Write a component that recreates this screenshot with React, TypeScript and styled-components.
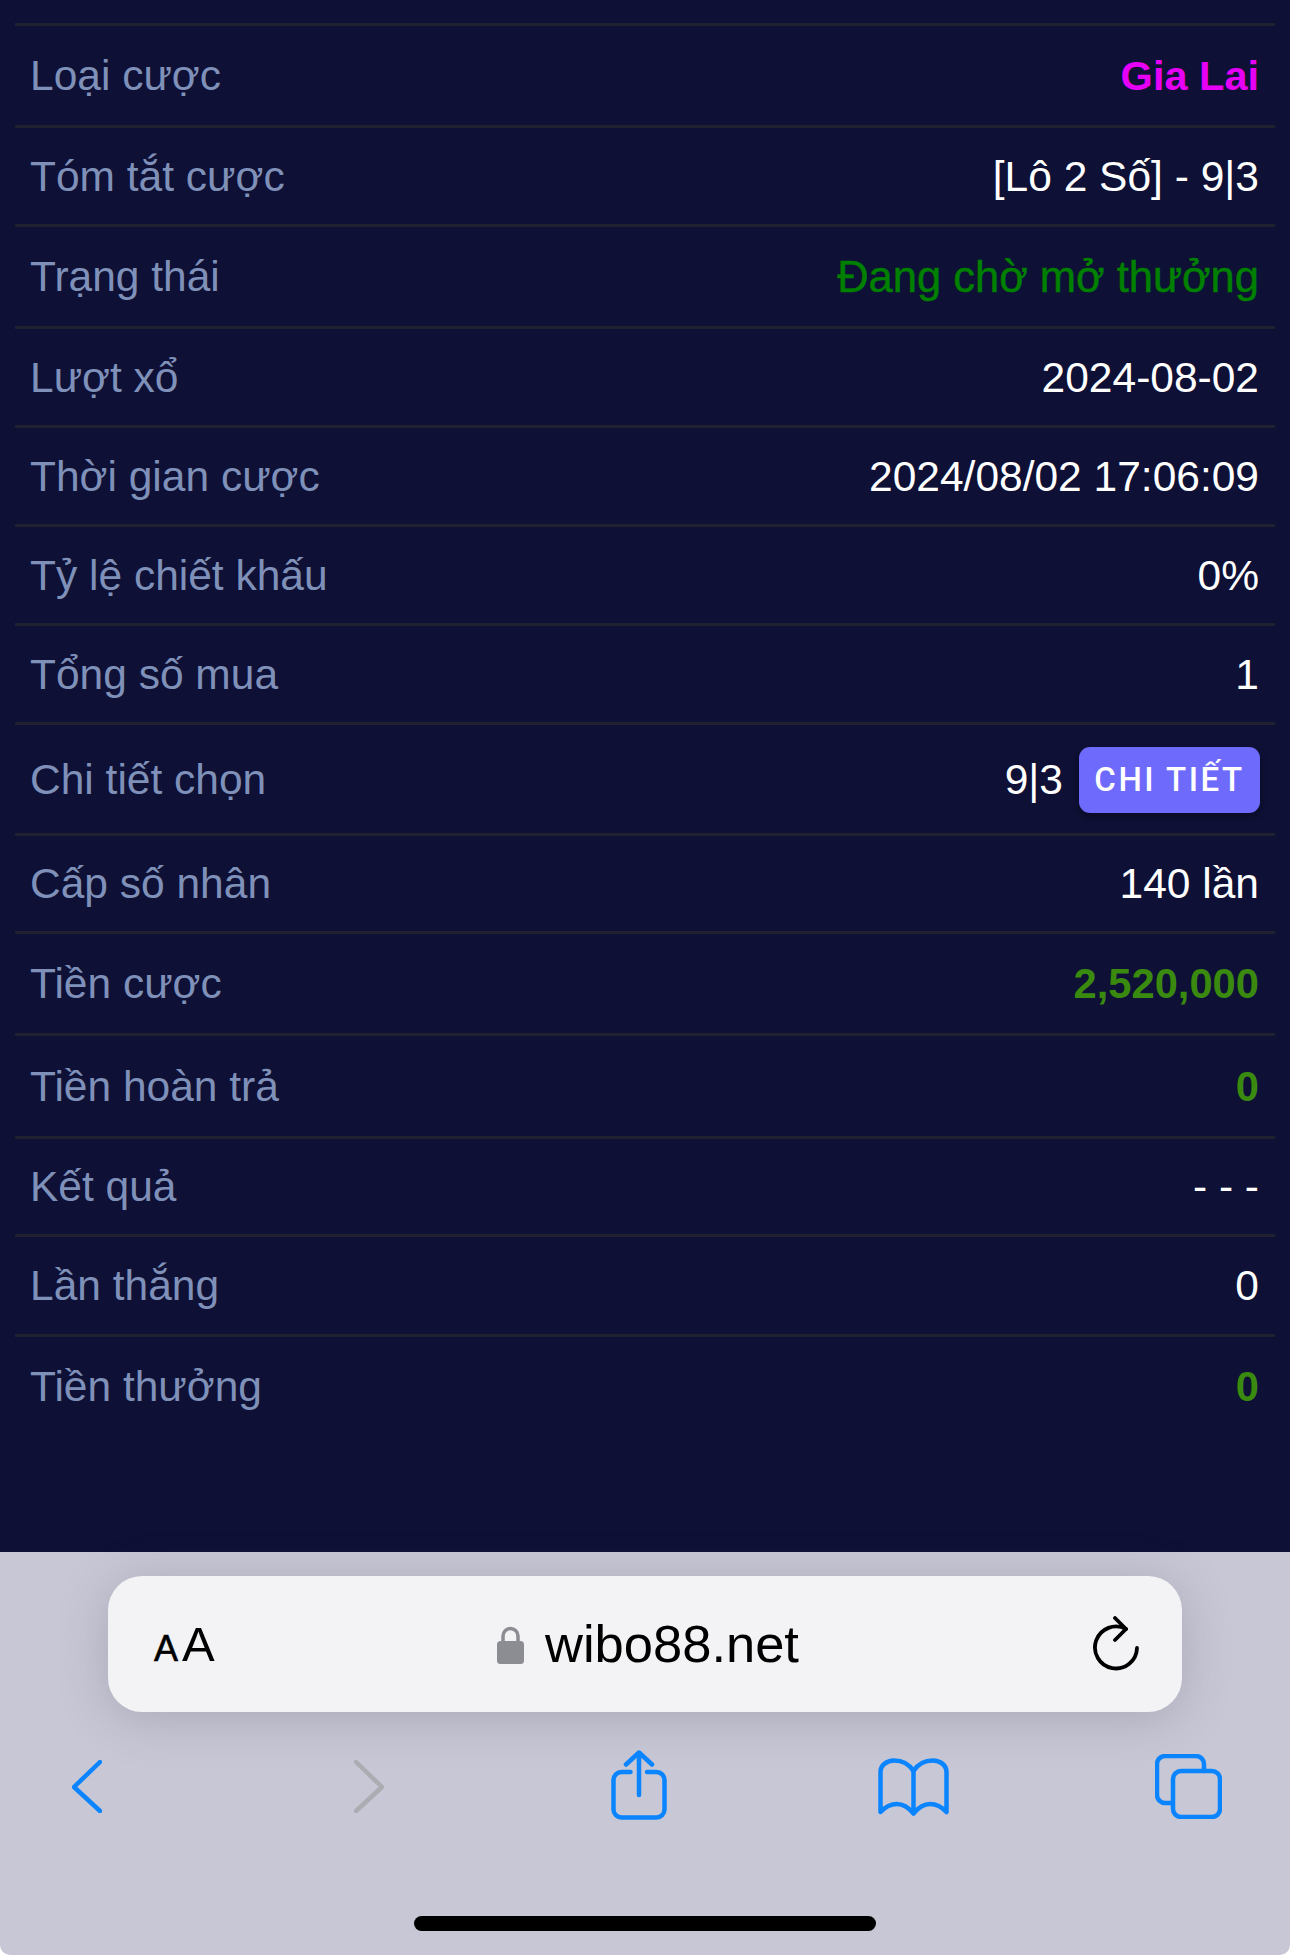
import React from "react";
import styled, { createGlobalStyle } from "styled-components";

const Global = createGlobalStyle`
  html, body { margin: 0; padding: 0; background: #fff; }
  body { font-family: "Liberation Sans", Arial, sans-serif; }
  * { box-sizing: border-box; }
`;

const Page = styled.div`
  width: 1290px;
  height: 1955px;
  display: flex;
  flex-direction: column;
  overflow: hidden;
  background: #fff;
`;

const Table = styled.div`
  flex: 1;
  padding: 23px 15px 0;
  display: flex;
  flex-direction: column;
  background: #0e1035;
`;

const Row = styled.div<{ $h: number }>`
  height: ${(p) => p.$h}px;
  border-top: 3px solid #1f2030;
  padding: 1px 16px 0 15px;
  display: flex;
  align-items: center;
  justify-content: space-between;
`;

const Label = styled.span`
  font-size: 42.5px;
  color: #7f90b9;
`;

type Tone = "plain" | "magenta" | "status" | "money";
const toneColor: Record<Tone, string> = {
  plain: "#ffffff",
  magenta: "#e600f5",
  status: "#008000",
  money: "#3a8a10",
};
const toneSize: Record<Tone, number> = {
  plain: 42.5,
  magenta: 41.5,
  status: 43.5,
  money: 41.7,
};

const Value = styled.span<{ $tone: Tone }>`
  font-size: ${(p) => toneSize[p.$tone]}px;
  color: ${(p) => toneColor[p.$tone]};
  font-weight: ${(p) => (p.$tone === "magenta" || p.$tone === "money" ? 700 : 400)};
  -webkit-text-stroke: ${(p) => (p.$tone === "status" ? "0.5px #008000" : "0")};
`;

const ValueGroup = styled.div`
  display: flex;
  align-items: center;
  gap: 16px;
`;

const DetailButton = styled.button`
  width: 181px;
  height: 66px;
  margin-right: -1px;
  border: 0;
  border-radius: 11px;
  background: #6e6afb;
  color: #fff;
  font-family: Roboto, "Liberation Sans", Arial, sans-serif;
  font-weight: 500;
  font-size: 33px;
  letter-spacing: 2.5px;
  padding: 0;
  box-shadow: 0 3px 6px rgba(0, 0, 0, 0.35);
`;

const Toolbar = styled.div`
  height: 403px;
  flex: none;
  background: #c7c7d5;
  border-radius: 0 0 10px 10px;
  display: flex;
  flex-direction: column;
`;

const UrlBar = styled.div`
  height: 136px;
  margin: 24px 108px 0;
  padding: 0 42px 0 46px;
  border-radius: 34px;
  background: #f3f3f6;
  box-shadow: 0 6px 48px rgba(90, 90, 110, 0.28);
  display: flex;
  align-items: center;
  justify-content: space-between;
  color: #000;
`;

const FontSize = styled.div`
  display: flex;
  align-items: baseline;
  width: 60px;
  line-height: 1;
`;

const SmallA = styled.span`
  font-size: 36px;
  margin-right: 4px;
  -webkit-text-stroke: 0.6px #000;
`;

const BigA = styled.span`
  font-size: 49px;
`;

const Address = styled.div`
  display: flex;
  align-items: center;
  gap: 21px;
  margin-right: 10px;
`;

const Domain = styled.span`
  font-size: 52.5px;
  line-height: 1;
`;

const LockIcon = styled.svg`
  width: 27px;
  height: 38px;
  margin-top: 1px;
`;

const ReloadIcon = styled.svg`
  width: 48px;
  height: 56px;
`;

const IconRow = styled.div`
  display: flex;
  align-items: flex-start;
  margin-top: 38px;
  height: 72px;
`;

const ToolIcon = styled.svg<{ $left: number; $top: number; $w: number; $h: number; $muted?: boolean }>`
  flex: none;
  width: ${(p) => p.$w}px;
  height: ${(p) => p.$h}px;
  margin-left: ${(p) => p.$left}px;
  margin-top: ${(p) => p.$top}px;
  fill: none;
  stroke: ${(p) => (p.$muted ? "#acacb3" : "#0a84ff")};
  stroke-width: 4.5;
  stroke-linecap: round;
  stroke-linejoin: round;
`;

const HomeIndicator = styled.div`
  width: 462px;
  height: 15px;
  margin: 94px 0 0 414px;
  border-radius: 8px;
  background: #000;
`;

const rows: { label: string; value: string; tone: Tone; h: number; detail?: boolean }[] = [
  { label: "Loại cược", value: "Gia Lai", tone: "magenta", h: 102 },
  { label: "Tóm tắt cược", value: "[Lô 2 Số] - 9|3", tone: "plain", h: 99 },
  { label: "Trạng thái", value: "Đang chờ mở thưởng", tone: "status", h: 102 },
  { label: "Lượt xổ", value: "2024-08-02", tone: "plain", h: 99 },
  { label: "Thời gian cược", value: "2024/08/02 17:06:09", tone: "plain", h: 99 },
  { label: "Tỷ lệ chiết khấu", value: "0%", tone: "plain", h: 99 },
  { label: "Tổng số mua", value: "1", tone: "plain", h: 99 },
  { label: "Chi tiết chọn", value: "9|3", tone: "plain", h: 111, detail: true },
  { label: "Cấp số nhân", value: "140 lần", tone: "plain", h: 98 },
  { label: "Tiền cược", value: "2,520,000", tone: "money", h: 102 },
  { label: "Tiền hoàn trả", value: "0", tone: "money", h: 103 },
  { label: "Kết quả", value: "- - -", tone: "plain", h: 98 },
  { label: "Lần thắng", value: "0", tone: "plain", h: 100 },
  { label: "Tiền thưởng", value: "0", tone: "money", h: 102 },
];

export default function App() {
  return (
    <Page>
      <Global />
      <Table>
        {rows.map((r) => (
          <Row key={r.label} $h={r.h}>
            <Label>{r.label}</Label>
            {r.detail ? (
              <ValueGroup>
                <Value $tone={r.tone}>{r.value}</Value>
                <DetailButton>CHI TIẾT</DetailButton>
              </ValueGroup>
            ) : (
              <Value $tone={r.tone}>{r.value}</Value>
            )}
          </Row>
        ))}
      </Table>
      <Toolbar>
        <UrlBar>
          <FontSize>
            <SmallA>A</SmallA>
            <BigA>A</BigA>
          </FontSize>
          <Address>
            <LockIcon viewBox="0 0 27 38">
              <path d="M6 17V10a7.5 7.5 0 0 1 15 0v7" fill="none" stroke="#8c8c93" strokeWidth="3.5" />
              <rect x="0" y="15" width="27" height="23" rx="3.5" fill="#8c8c93" />
            </LockIcon>
            <Domain>wibo88.net</Domain>
          </Address>
          <ReloadIcon viewBox="0 0 48 56" fill="none" stroke="#000" strokeWidth="3.8" strokeLinecap="round" strokeLinejoin="round">
            <path d="M34 13A21 21 0 1 0 45 32" />
            <path d="M23 2l11 11-11 11" />
          </ReloadIcon>
        </UrlBar>
        <IconRow>
          <ToolIcon $left={72} $top={10} $w={30} $h={53} viewBox="0 0 30 53">
            <path d="M28 2L2 27 28 51" />
          </ToolIcon>
          <ToolIcon $left={252} $top={10} $w={30} $h={53} $muted viewBox="0 0 30 53">
            <path d="M2 2l26 25L2 51" />
          </ToolIcon>
          <ToolIcon $left={227} $top={0} $w={56} $h={70} viewBox="0 0 56 70">
            <path d="M28 45V2.500M15 14.500L28 2.500l13 12" />
            <path d="M19.500 22H10.500a8 8 0 0 0-8 8v29.500a8 8 0 0 0 8 8h35a8 8 0 0 0 8-8V30a8 8 0 0 0-8-8H36" />
          </ToolIcon>
          <ToolIcon $left={211} $top={8} $w={71} $h={58} viewBox="0 0 71 58">
            <path d="M35.500 13V55" />
            <path d="M2.500 14V54C8 48 14 46 19 46C26 46 31 50 35.500 55.500C40 50 45 46 52 46C57 46 63 48 68.500 54V14C68.500 7 62 2.500 55 2.500C47 2.500 40 6 35.500 13C31 6 24 2.500 16 2.500C9 2.500 2.500 7 2.500 14Z" />
          </ToolIcon>
          <ToolIcon $left={206} $top={4} $w={67} $h={65} viewBox="0 0 67 65">
            <path d="M16 49H10a8 8 0 0 1-8-8V10a8 8 0 0 1 8-8h31a8 8 0 0 1 8 8v7" />
            <rect x="18" y="17" width="47" height="46" rx="8" />
          </ToolIcon>
        </IconRow>
        <HomeIndicator />
      </Toolbar>
    </Page>
  );
}
